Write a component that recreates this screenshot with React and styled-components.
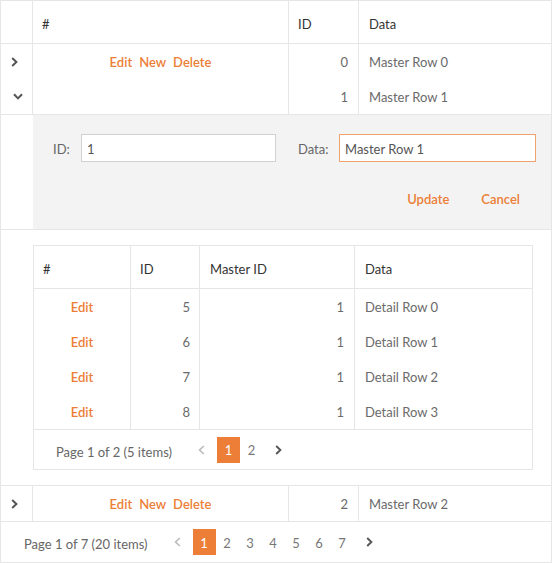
import React, { useEffect, useRef } from "react";
import styled, { createGlobalStyle } from "styled-components";

const ORANGE = "#ec7e37";
const BORDER = "#e6e6e6";

const Global = createGlobalStyle`
  *, *::before, *::after { box-sizing: border-box; }
  body {
    margin: 0;
    background: #fff;
    font-family: Lato, "Liberation Sans", sans-serif;
    font-size: 13px;
  }
`;

const GridFrame = styled.div`
  width: ${(p) => (p.$w ? `${p.$w}px` : "auto")};
  border: 1px solid ${BORDER};
  background: #fff;
`;

const Row = styled.div`
  display: grid;
  grid-template-columns: ${(p) => p.$cols};
  height: ${(p) => p.$h}px;
  border-bottom: ${(p) => (p.$divider ? `1px solid ${BORDER}` : "none")};
`;

const Cell = styled.div`
  display: flex;
  align-items: center;
  justify-content: ${(p) =>
    p.$align === "right" ? "flex-end" : p.$align === "center" ? "center" : "flex-start"};
  gap: 7px;
  padding: ${(p) => (p.$head ? 3 : 1)}px ${(p) => p.$pr ?? 10}px 0 ${(p) => p.$pl ?? 10}px;
  border-right: ${(p) => (p.$last ? "none" : `1px solid ${BORDER}`)};
  color: ${(p) => (p.$head ? "#333" : "#6a6a6a")};
  white-space: nowrap;
  overflow: hidden;
`;

const Link = styled.span`
  color: ${ORANGE};
  font-weight: 600;
  cursor: pointer;
`;

const EditRow = styled.div`
  display: grid;
  grid-template-columns: 32px 1fr;
  border-top: 1px solid ${BORDER};
  border-bottom: 1px solid ${BORDER};
`;

const EditForm = styled.div`
  background: #f3f3f3;
  padding: 19px 15px 17px 20px;
`;

const FieldRow = styled.div`
  display: flex;
  gap: 22px;
`;

const Field = styled.label`
  display: flex;
  align-items: center;
`;

const Label = styled.span`
  width: ${(p) => p.$w}px;
  padding-top: 1px;
  color: #666;
`;

const Input = styled.input`
  width: ${(p) => p.$w}px;
  height: 28px;
  padding: 1px 5px 0;
  border: 1px solid ${(p) => (p.$focused ? "#f0a36f" : "#d2d2d2")};
  background: #fff;
  font-family: inherit;
  font-size: 13px;
  color: #555;
  outline: none;
  caret-color: #333;
`;

const ButtonRow = styled.div`
  display: flex;
  justify-content: flex-end;
  margin-top: 22px;
`;

const TextButton = styled.button`
  height: 28px;
  padding: 1px 16px 0;
  border: none;
  background: transparent;
  color: ${ORANGE};
  font-family: inherit;
  font-size: 13px;
  font-weight: 600;
  cursor: pointer;
`;

const DetailRow = styled.div`
  padding: 15px 18px 15px 32px;
  border-bottom: 1px solid ${BORDER};
`;

const Pager = styled.div`
  display: flex;
  align-items: center;
  height: ${(p) => p.$h}px;
  padding-left: ${(p) => p.$pl}px;
  border-top: 1px solid ${BORDER};
  color: #666;
`;

const PagerInfo = styled.span`
  margin-right: 18px;
  padding-top: 4px;
  white-space: nowrap;
`;

const PageNav = styled.div`
  display: flex;
  align-items: center;
`;

const PageButton = styled.span`
  display: flex;
  align-items: center;
  justify-content: center;
  width: 23px;
  height: 26px;
  padding-top: 1px;
  background: ${(p) => (p.$active ? ORANGE : "transparent")};
  color: ${(p) => (p.$active ? "#fff" : "#777")};
`;

const ArrowButton = styled.span`
  display: flex;
  align-items: center;
  justify-content: center;
  width: 23px;
  height: 26px;
  margin: 0 ${(p) => (p.$dir === "next" ? 0 : 4)}px 0 ${(p) => (p.$dir === "next" ? 4 : 0)}px;
  color: ${(p) => (p.$disabled ? "#bdbdbd" : "#555")};
`;

const ChevronRight = ({ w = 7, h = 10, sw = 2 }) => (
  <svg width={w} height={h} viewBox="0 0 7 10" fill="none">
    <polyline points="1.2,1 5.4,5 1.2,9" stroke="currentColor" strokeWidth={sw} />
  </svg>
);

const ChevronLeft = ({ w = 7, h = 10, sw = 2 }) => (
  <svg width={w} height={h} viewBox="0 0 7 10" fill="none">
    <polyline points="5.8,1 1.6,5 5.8,9" stroke="currentColor" strokeWidth={sw} />
  </svg>
);

const ChevronDown = () => (
  <svg width="10" height="7" viewBox="0 0 10 7" fill="none">
    <polyline points="1,1.2 5,5.4 9,1.2" stroke="currentColor" strokeWidth="2" />
  </svg>
);

const ExpandCell = styled(Cell)`
  color: #555;
  padding: 0 0 0 ${(p) => p.$pl}px;
`;

const MAIN_COLS = "32px 256px 70px 1fr";
const DETAIL_COLS = "97px 69px 155px 1fr";

function PagerBar({ h, pl, pages, info }) {
  return (
    <Pager $h={h} $pl={pl}>
      <PagerInfo>{info}</PagerInfo>
      <PageNav>
        <ArrowButton $dir="prev" $disabled>
          <ChevronLeft sw={1.7} />
        </ArrowButton>
        {Array.from({ length: pages }, (_, i) => (
          <PageButton key={i} $active={i === 0}>
            {i + 1}
          </PageButton>
        ))}
        <ArrowButton $dir="next">
          <ChevronRight sw={1.9} />
        </ArrowButton>
      </PageNav>
    </Pager>
  );
}

function MasterRow({ id, expanded }) {
  return (
    <Row $cols={MAIN_COLS} $h={35}>
      <ExpandCell $pl={expanded ? 12 : 10}>
        {expanded ? <ChevronDown /> : <ChevronRight />}
      </ExpandCell>
      <Cell $align="center">
        {!expanded && (
          <>
            <Link>Edit</Link>
            <Link>New</Link>
            <Link>Delete</Link>
          </>
        )}
      </Cell>
      <Cell $align="right">{id}</Cell>
      <Cell $last>Master Row {id}</Cell>
    </Row>
  );
}

const details = [5, 6, 7, 8];

export default function App() {
  const dataRef = useRef(null);
  useEffect(() => {
    const el = dataRef.current;
    if (el) {
      el.focus();
      const n = el.value.length;
      el.setSelectionRange(n, n);
    }
  }, []);

  return (
    <>
      <Global />
      <GridFrame $w={552}>
        <Row $cols={MAIN_COLS} $h={43} $divider>
          <Cell $head />
          <Cell $head $pl={9}>#</Cell>
          <Cell $head $pl={9}>ID</Cell>
          <Cell $head $last>Data</Cell>
        </Row>
        <MasterRow id={0} />
        <MasterRow id={1} expanded />
        <EditRow>
          <div />
          <EditForm>
            <FieldRow>
              <Field>
                <Label $w={28}>ID:</Label>
                <Input $w={195} defaultValue="1" />
              </Field>
              <Field>
                <Label $w={41}>Data:</Label>
                <Input $w={197} $focused ref={dataRef} defaultValue="Master Row 1" />
              </Field>
            </FieldRow>
            <ButtonRow>
              <TextButton>Update</TextButton>
              <TextButton>Cancel</TextButton>
            </ButtonRow>
          </EditForm>
        </EditRow>
        <DetailRow>
          <GridFrame>
            <Row $cols={DETAIL_COLS} $h={43} $divider>
              <Cell $head $pl={9}>#</Cell>
              <Cell $head $pl={9}>ID</Cell>
              <Cell $head>Master ID</Cell>
              <Cell $head $last>Data</Cell>
            </Row>
            {details.map((id, i) => (
              <Row key={id} $cols={DETAIL_COLS} $h={35}>
                <Cell $align="center">
                  <Link>Edit</Link>
                </Cell>
                <Cell $align="right" $pr={9}>{id}</Cell>
                <Cell $align="right">1</Cell>
                <Cell $last>Detail Row {i}</Cell>
              </Row>
            ))}
            <PagerBar h={40} pl={22} pages={2} info="Page 1 of 2 (5 items)" />
          </GridFrame>
        </DetailRow>
        <MasterRow id={2} />
        <PagerBar h={41} pl={23} pages={7} info="Page 1 of 7 (20 items)" />
      </GridFrame>
    </>
  );
}
